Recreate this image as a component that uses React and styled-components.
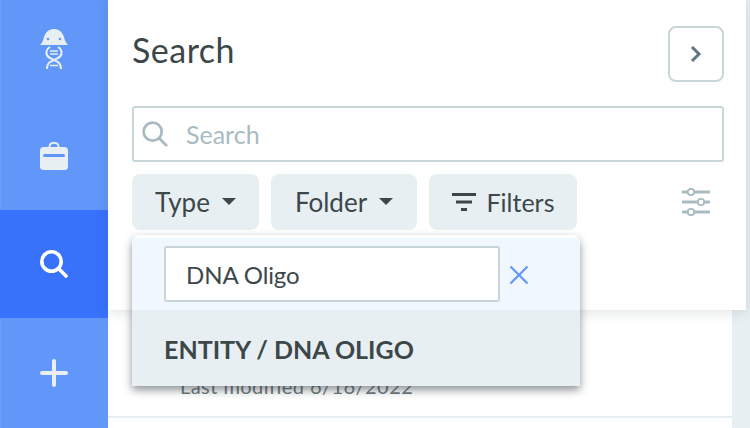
import React from 'react';
import styled, { createGlobalStyle } from 'styled-components';

const Global = createGlobalStyle`
  html, body { margin: 0; padding: 0; background: #fff; }
  * { box-sizing: border-box; }
`;

const Page = styled.div`
  width: 750px; height: 428px; display: flex; overflow: hidden;
  font-family: Lato, "Noto Sans", sans-serif; color: #3c474a; background: #fff;
`;
const Rail = styled.nav`
  width: 108px; flex: none; display: flex; flex-direction: column; background: #6097f8;
  box-shadow: inset 1px 0 0 #6c9ff9;
`;
const RailItem = styled.div`
  height: ${p => p.$h}px; display: flex; align-items: center; justify-content: center;
  background: ${p => (p.$active ? '#3871fa' : 'transparent')};
  svg { display: block; transform: translateY(${p => p.$dy || 0}px); }
`;
const Main = styled.main`
  flex: 1; display: flex; flex-direction: column; position: relative; min-width: 0;
  background: #e8eff2;
`;
const Panel = styled.section`
  height: 310px; flex: none; width: 638px; background: #fff; padding: 26px 22px 0 24px;
  box-shadow: 0 2px 12px rgba(60, 80, 90, .16); position: relative; z-index: 2;
`;
const Header = styled.header`
  display: flex; justify-content: space-between; align-items: flex-start; height: 56px;
`;
const Title = styled.h1`
  margin: 4px 0 0; font-size: 34px; font-weight: 400; line-height: 40px; letter-spacing: .5px;
`;
const SquareButton = styled.button`
  width: 56px; height: 56px; border: 2px solid #c8d6da; border-radius: 8px; background: #fff;
  display: flex; align-items: center; justify-content: center; padding: 0;
`;
const SearchBox = styled.div`
  margin-top: 24px; height: 56px; border: 2px solid #c8d6da; border-radius: 3px;
  display: flex; align-items: center; padding-left: 8px; gap: 18px;
  color: #a9bbc1; font-size: 25px;
`;
const FilterRow = styled.div`
  margin-top: 12px; display: flex; gap: 12px; align-items: center;
`;
const Chip = styled.button`
  height: 56px; width: ${p => p.$w}px; border: 0; border-radius: 8px; background: #e8eff2;
  font: inherit; font-size: ${p => p.$size || 26}px; color: #3c474a; padding: 0;
  display: flex; align-items: center; justify-content: center; gap: ${p => p.$gap}px;
`;
const Caret = styled.span`
  width: 0; height: 0; border-left: 7px solid transparent; border-right: 7px solid transparent;
  border-top: 7px solid #3c474a; margin-top: -1px;
`;
const Tune = styled.span`
  margin-left: auto; margin-right: 14px; display: flex;
`;
const Dropdown = styled.div`
  position: absolute; left: 24px; top: 235px; width: 448px; height: 151px; z-index: 3;
  background: #fff; border-radius: 8px 8px 2px 2px; overflow: hidden; padding-top: 3px;
  display: flex; flex-direction: column;
`;
const DropShadow = styled.div`
  position: absolute; left: 24px; top: 235px; width: 448px; height: 151px; z-index: 3;
  border-radius: 8px 8px 2px 2px;
  box-shadow: 0 4px 8px rgba(30, 40, 45, .5);
`;
const DropHead = styled.div`
  height: 72px; flex: none; background: #f0f7ff; display: flex; align-items: flex-start;
  padding: 8px 0 0 32px; gap: 9px;
`;
const DropInput = styled.div`
  width: 336px; height: 56px; background: #fff; border: 2px solid #c8d6da; border-radius: 3px;
  padding-left: 20px; display: flex; align-items: center; font-size: 24px; color: #3c474a;
  letter-spacing: -.1px;
`;
const ClearIcon = styled.span`
  display: flex; margin-top: 19px;
`;
const Option = styled.div`
  flex: 1; background: #e8eff2; padding: 23px 0 0 32px; font-size: 25px; font-weight: 700;
  line-height: 32px; color: #3c474a;
`;
const ListArea = styled.div`
  flex: 1; width: 624px; background: #fff; min-height: 0; overflow: hidden;
`;
const ListRow = styled.div`
  height: 108px; border-bottom: 2px solid #e8eff2; padding: 64px 0 0 72px;
  font-size: 20px; line-height: 24px; color: #6d7b80; letter-spacing: .45px;
`;

const Logo = () => (
  <svg width="28" height="41" viewBox="0 0 28 41" fill="none">
    <path d="M0 16 C2 14 3 12 4 8 C6 2 10 0 14 0 C18 0 22 2 24 8 C25 12 26 14 28 16 Z" fill="#e8eff2" />
    <circle cx="8" cy="10" r="1.3" fill="#6097f8" />
    <circle cx="20" cy="10" r="1.3" fill="#6097f8" />
    <path d="M10 18 C5 21 5.5 27 10 29 L18 33 C20 34.5 21 37 21 40 M18 18 C23 21 22.5 27 18 29 L10 33 C8 34.5 7 37 7 40" stroke="#e8eff2" strokeWidth="2" />
    <path d="M10 22 H18 M10 25 H18 M10 36.5 H18" stroke="#e8eff2" strokeWidth="1.6" />
  </svg>
);
const Case = () => (
  <svg width="28" height="28" viewBox="0 0 28 28">
    <path d="M9.5 6 V4.5 C9.5 2.3 11.5 .8 14 .8 C16.5 .8 18.5 2.3 18.5 4.5 V6" fill="none" stroke="#e8eff2" strokeWidth="2" />
    <rect x="0" y="5" width="28" height="23" rx="3.5" fill="#e8eff2" />
    <rect x="3" y="12" width="22" height="3" rx="1.5" fill="#6097f8" />
  </svg>
);
const Lens = ({ size = 28, color = '#fff', w = 3.6 }) => (
  <svg width={size} height={size} viewBox="0 0 28 28" fill="none" stroke={color} strokeWidth={w} strokeLinecap="round">
    <circle cx="11.5" cy="11.5" r="9.7" />
    <path d="M19 19 L26 26" />
  </svg>
);
const Plus = () => (
  <svg width="28" height="28" viewBox="0 0 28 28" stroke="#e8eff2" strokeWidth="4" strokeLinecap="round">
    <path d="M14 2 V26 M2 14 H26" />
  </svg>
);
const Chevron = () => (
  <svg width="14" height="18" viewBox="0 0 14 18" fill="none" stroke="#5f7780" strokeWidth="3">
    <path d="M3 2 L10 9 L3 16" />
  </svg>
);
const FilterGlyph = () => (
  <svg width="24" height="20" viewBox="0 0 24 20" fill="#3c474a">
    <rect x="0" y="1" width="24" height="3" />
    <rect x="4" y="8.5" width="16" height="3" />
    <rect x="9" y="16" width="6" height="3" />
  </svg>
);
const Sliders = () => (
  <svg width="28" height="28" viewBox="0 0 28 28" fill="#fff" stroke="#a9bbc1">
    <path d="M1 4 H27 M1 14 H27 M1 24 H27" strokeWidth="3" strokeLinecap="round" />
    <circle cx="9" cy="4" r="3.2" strokeWidth="1.8" />
    <circle cx="19" cy="14" r="3.2" strokeWidth="1.8" />
    <circle cx="9" cy="24" r="3.2" strokeWidth="1.8" />
  </svg>
);
const Cross = () => (
  <svg width="20" height="20" viewBox="0 0 20 20" stroke="#6097f8" strokeWidth="2.2">
    <path d="M1.5 1.5 L18.5 18.5 M18.5 1.5 L1.5 18.5" />
  </svg>
);

export default function App() {
  return (
    <Page>
      <Global />
      <Rail>
        <RailItem $h={102} $dy={-2}><Logo /></RailItem>
        <RailItem $h={108}><Case /></RailItem>
        <RailItem $h={108} $active><Lens /></RailItem>
        <RailItem $h={110} $dy={0}><Plus /></RailItem>
      </Rail>
      <Main>
        <Panel>
          <Header>
            <Title>Search</Title>
            <SquareButton aria-label="Collapse"><Chevron /></SquareButton>
          </Header>
          <SearchBox><Lens size={26} color="#a9bbc1" w={3} />Search</SearchBox>
          <FilterRow>
            <Chip $w={127} $gap={12}>Type<Caret /></Chip>
            <Chip $w={146} $gap={12}>Folder<Caret /></Chip>
            <Chip $w={148} $gap={11} $size={25}><FilterGlyph />Filters</Chip>
            <Tune><Sliders /></Tune>
          </FilterRow>
        </Panel>
        <DropShadow />
        <Dropdown>
          <DropHead>
            <DropInput>DNA Oligo</DropInput>
            <ClearIcon><Cross /></ClearIcon>
          </DropHead>
          <Option>ENTITY / DNA OLIGO</Option>
        </Dropdown>
        <ListArea>
          <ListRow>Last modified 6/16/2022</ListRow>
        </ListArea>
      </Main>
    </Page>
  );
}
